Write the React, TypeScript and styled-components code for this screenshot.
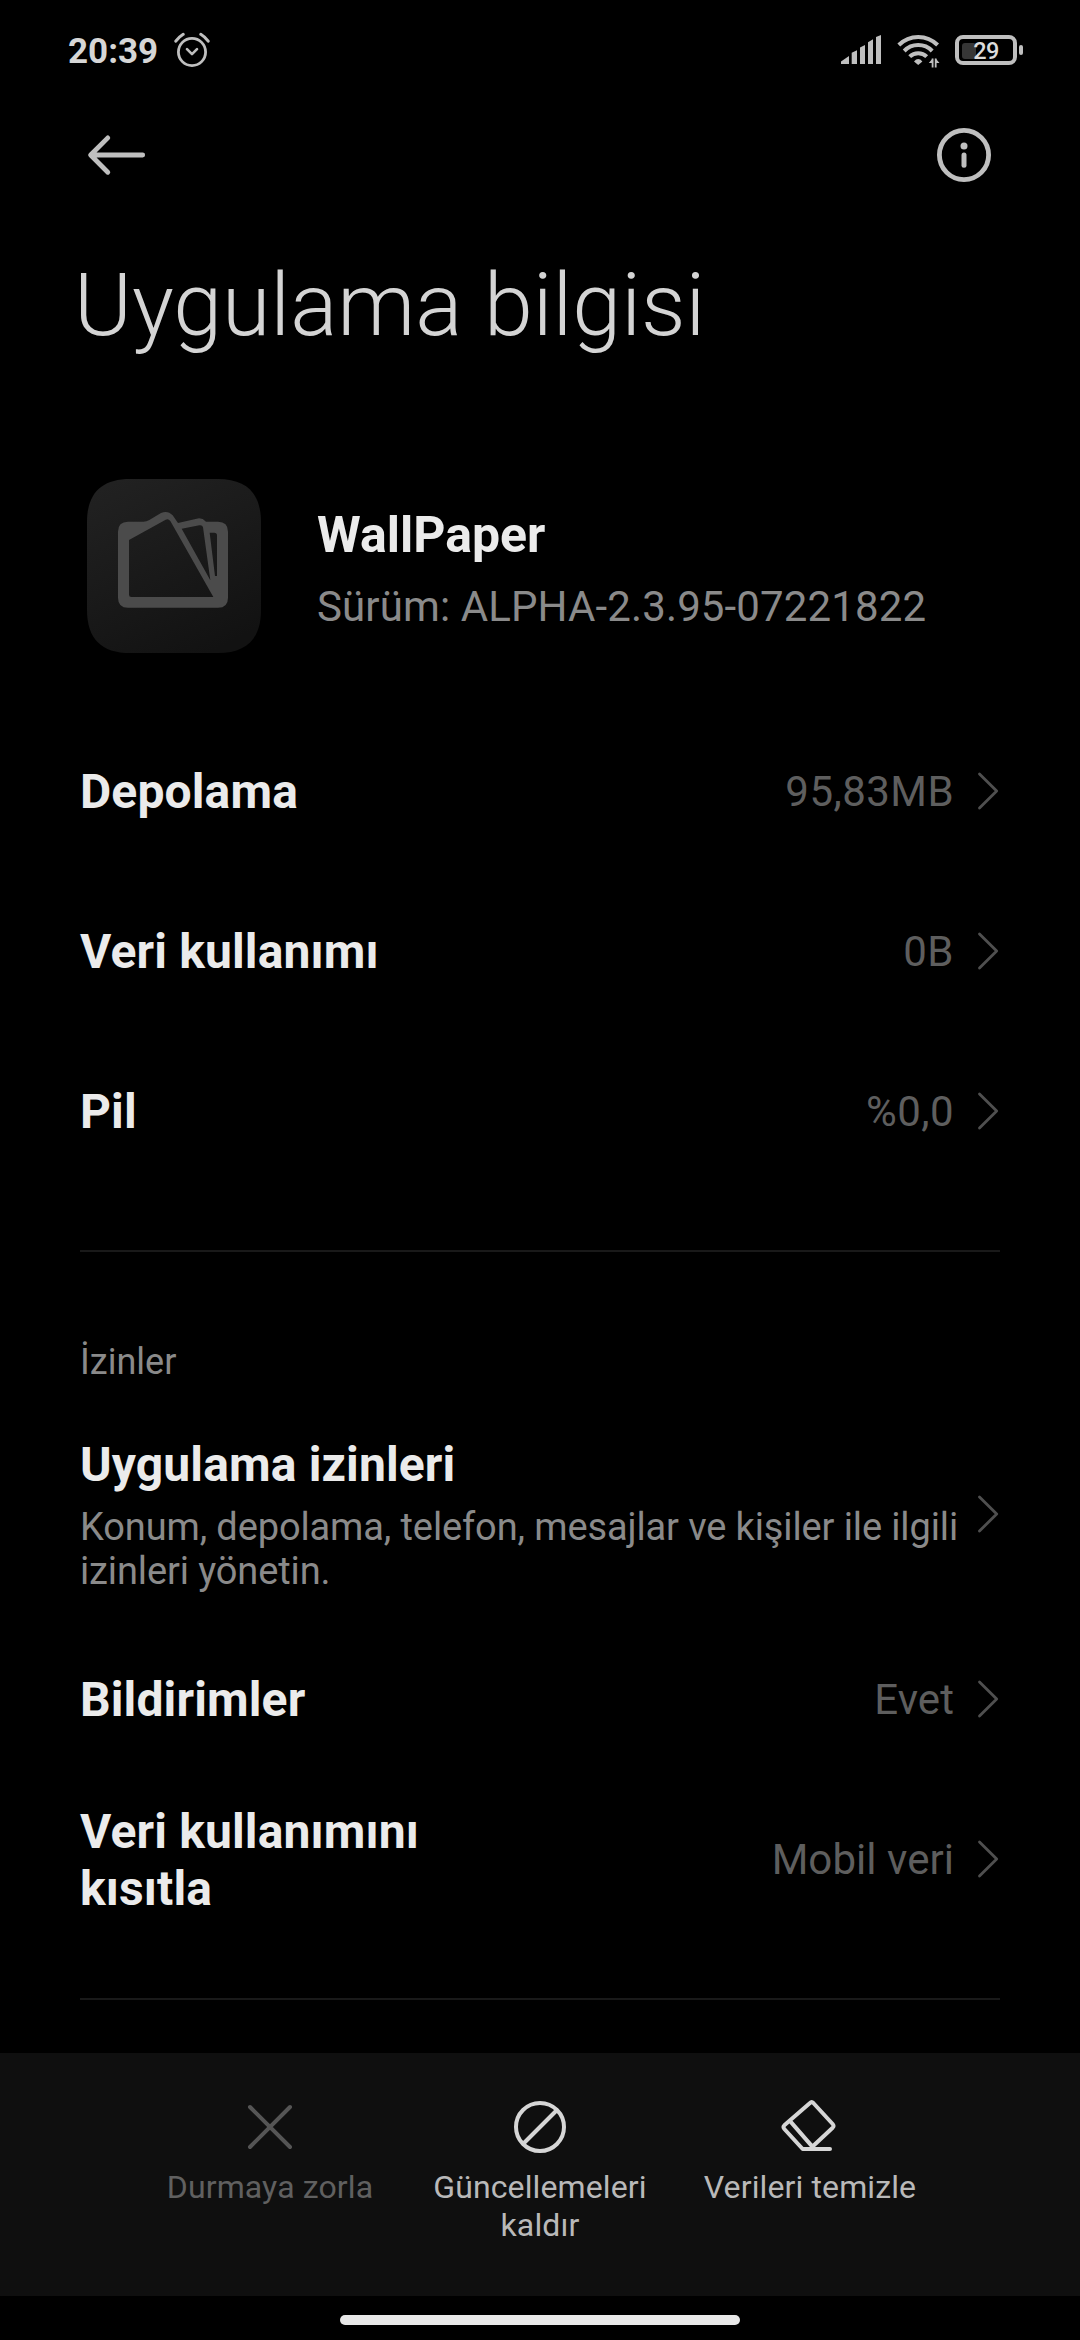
import React from "react";
import styled, { createGlobalStyle } from "styled-components";

const GlobalStyle = createGlobalStyle`
  * { box-sizing: border-box; }
  html, body { margin: 0; padding: 0; background: #000; }
  body { font-family: Roboto, "Noto Sans", sans-serif; color: #e8e8e8; }
  svg { display: block; flex: none; }
`;

const Screen = styled.div`
  width: 1080px;
  height: 2340px;
  display: flex;
  flex-direction: column;
  background: #000;
  overflow: hidden;
`;

const StatusBar = styled.header`
  height: 100px;
  flex: none;
  display: flex;
  align-items: center;
  justify-content: space-between;
  padding: 0 57px 0 68px;
`;

const StatusGroup = styled.div<{ $gap: number }>`
  display: flex;
  align-items: center;
  gap: ${(p) => p.$gap}px;
`;

const Clock = styled.span`
  font-size: 35px;
  line-height: 42px;
  font-weight: 700;
  color: #d6d6d6;
  padding-top: 3px;
`;

const Battery = styled.div`
  display: flex;
  align-items: center;
  gap: 2px;
`;

const BatteryBody = styled.div`
  width: 62px;
  height: 30px;
  border: 4px solid #bfbfbf;
  border-radius: 8px;
  padding: 3px;
  display: grid;
  align-items: center;
`;

const BatteryFill = styled.div`
  grid-area: 1 / 1;
  width: 14px;
  height: 16px;
  border-radius: 3px;
  background: #363636;
`;

const BatteryText = styled.span`
  grid-area: 1 / 1;
  justify-self: center;
  font-size: 23.5px;
  line-height: 16px;
  letter-spacing: -0.6px;
  font-weight: 500;
  color: #dcdcdc;
  padding-top: 1px;
`;

const BatteryTip = styled.div`
  width: 4px;
  height: 10px;
  border-radius: 2px;
  background: #bfbfbf;
`;

const Toolbar = styled.nav`
  height: 110px;
  flex: none;
  display: flex;
  align-items: center;
  justify-content: space-between;
  padding: 0 86px;
`;

const IconButton = styled.button`
  border: 0;
  padding: 0;
  background: none;
`;

const Title = styled.h1`
  margin: 43px 0 0 74px;
  height: 104px;
  font-size: 88px;
  line-height: 104px;
  font-weight: 300;
  color: #d4d4d4;
  white-space: nowrap;
`;

const AppHeader = styled.section`
  margin-top: 122px;
  height: 174px;
  padding: 0 87px;
  display: flex;
  align-items: center;
  gap: 56px;
`;

const AppText = styled.div`
  display: flex;
  flex-direction: column;
  gap: 17px;
  padding-top: 5px;
`;

const AppName = styled.h2`
  margin: 0;
  font-size: 50px;
  line-height: 60px;
  font-weight: 700;
  color: #ebebeb;
`;

const AppVersion = styled.span`
  font-size: 42px;
  line-height: 50px;
  letter-spacing: 0.12px;
  color: #8a8a8a;
  white-space: nowrap;
`;

const List = styled.section<{ $top: number }>`
  margin-top: ${(p) => p.$top}px;
  padding: 0 80px;
  display: flex;
  flex-direction: column;
`;

const Row = styled.div<{ $height: number }>`
  height: ${(p) => p.$height}px;
  display: flex;
  align-items: center;
`;

const RowText = styled.div<{ $width?: number }>`
  flex: ${(p) => (p.$width ? "none" : "1")};
  width: ${(p) => (p.$width ? p.$width + "px" : "auto")};
  padding-bottom: ${(p) => (p.$width ? "0" : "1px")};
`;

const RowTitle = styled.div`
  font-size: 48px;
  line-height: 57px;
  letter-spacing: 0.14px;
  font-weight: 700;
  color: #ebebeb;
`;

const RowNote = styled.div`
  font-size: 38px;
  line-height: 44px;
  letter-spacing: -0.12px;
  color: #8a8a8a;
  padding-top: 12px;
  white-space: pre;
`;

const RowValue = styled.span<{ $numeric: boolean }>`
  margin-left: auto;
  padding-bottom: 1px;
  font-size: 42px;
  line-height: 50px;
  letter-spacing: ${(p) => (p.$numeric ? "0.45px" : "0.05px")};
  color: #5e5e5e;
  white-space: nowrap;
`;

const ChevronBox = styled.div<{ $gap: number }>`
  margin: 0 0 3px ${(p) => p.$gap}px;
`;

const Divider = styled.hr<{ $top: number }>`
  width: 920px;
  height: 2px;
  flex: none;
  border: 0;
  margin: ${(p) => p.$top}px 80px 0;
  background: #191919;
`;

const SectionLabel = styled.h3`
  margin: 88px 80px 0;
  height: 44px;
  font-size: 36px;
  line-height: 44px;
  font-weight: 400;
  color: #8a8a8a;
`;

const ActionBar = styled.footer`
  margin-top: auto;
  height: 243px;
  flex: none;
  display: flex;
  justify-content: center;
  background: #0f0f0f;
`;

const Action = styled.button<{ $disabled?: boolean }>`
  width: 270px;
  border: 0;
  padding: 44px 10px 0;
  background: none;
  display: flex;
  flex-direction: column;
  align-items: center;
  gap: 11px;
  font-family: inherit;
  font-size: 32px;
  line-height: 38px;
  letter-spacing: 0.12px;
  color: ${(p) => (p.$disabled ? "#606060" : "#b9b9b9")};
  white-space: pre-line;
`;

const HomeArea = styled.div`
  height: 44px;
  flex: none;
  display: flex;
  justify-content: center;
  padding-top: 19px;
`;

const HomePill = styled.div`
  width: 400px;
  height: 10px;
  border-radius: 5px;
  background: #e8e8e8;
`;

const AlarmIcon = () => (
  <svg width="36" height="36" viewBox="174 32 36 36" fill="none" stroke="#bfbfbf" strokeLinecap="round">
    <circle cx="192" cy="52" r="13.6" strokeWidth="2.8" />
    <path d="M187 49.2l5 5 5-5" strokeWidth="2.6" strokeLinejoin="round" />
    <path d="M175.8 41.2q3-4.200 7.400-6.900M208.200 41.200q-3-4.200-7.400-6.900" strokeWidth="3" />
  </svg>
);

const SignalIcon = () => (
  <svg width="40" height="30" viewBox="841 35 40 30" fill="#bfbfbf">
    <path d="M841 61.500l8-5.500v8h-8zM851.700 52.700l5.300-2.500v13.800h-5.300zM860 47.500l5-2.500v19h-5zM868 42.300l5-3v24.700h-5zM876 37l5-2v29h-5z" />
  </svg>
);

const WifiIcon = () => (
  <svg width="44" height="36" viewBox="896 32 44 36" fill="none" stroke="#bfbfbf" strokeWidth="4">
    <path d="M898.800 45a27.300 27.300 0 0 1 38.800 0M904.200 51a19.600 19.600 0 0 1 28 0M909.700 56.700a12 12 0 0 1 17 0" />
    <path d="M914 61.500q4.200-4.800 8.400 0L918.200 65z" fill="#bfbfbf" stroke="none" />
    <path d="M932.600 58.500v9M935.700 58.500v9" strokeWidth="1.800" />
    <path d="M932.600 58.500v4.500h-3.800zM935.700 58.500v4.500h3.800z" fill="#bfbfbf" stroke="none" />
  </svg>
);

const BackIcon = () => (
  <svg width="60" height="44" viewBox="86 133.300 60 44" fill="none" stroke="#bfbfbf" strokeWidth="4.800" strokeLinecap="round" strokeLinejoin="round">
    <path d="M107.800 138.200L90.600 155.300l17.200 17.200M91 155.300h51.700" />
  </svg>
);

const InfoIcon = () => (
  <svg width="60" height="60" viewBox="-30 -30 60 60">
    <circle r="24.600" fill="none" stroke="#bfbfbf" strokeWidth="4.800" />
    <circle cy="-9" r="3.500" fill="#bfbfbf" />
    <path d="M0 0v10.200" stroke="#bfbfbf" strokeWidth="5" strokeLinecap="round" />
  </svg>
);

const WallpaperIcon = () => (
  <svg width="174" height="174" viewBox="21 27 522 522">
    <defs>
      <linearGradient id="tile" x1="0.200" y1="0" x2="0.700" y2="1">
        <stop offset="0" stopColor="#212121" />
        <stop offset="1" stopColor="#121212" />
      </linearGradient>
    </defs>
    <path
      d="M151 27H413C500 27 543 70 543 157V419C543 506 500 549 413 549H151C64 549 21 506 21 419V157C21 70 64 27 151 27Z"
      fill="url(#tile)"
    />
    <path
      fill="#4b4b4b"
      fillRule="evenodd"
      d="M144 155H190Q200 155 208 150L243 129Q263 120 278 136L294 159L350 146Q366 142 378 155H414Q444 155 444 185V383Q444 413 414 413H144Q114 413 114 383V185Q114 155 144 155Z
         M147 210V374Q147 381 154 381H400L271 153Q265 145 257 149Z
         M305 176L391 331L369 172Q367 164 358 166Z
         M389 188L405 318H411V196Q411 188 403 188Z"
    />
  </svg>
);

const Chevron = ({ gap = 0 }: { gap?: number }) => (
  <ChevronBox $gap={gap}>
    <svg width="25" height="42" viewBox="0 0 25 42" fill="none" stroke="#4f4f4f" strokeWidth="2.800" strokeLinecap="round" strokeLinejoin="round">
      <path d="M4.500 4L21.700 21 4.500 38" />
    </svg>
  </ChevronBox>
);

const StopIcon = () => (
  <svg width="60" height="60" viewBox="-30 -30 60 60" stroke="#555" strokeWidth="4" strokeLinecap="round">
    <path d="M-20 -20L20 20M20 -20L-20 20" />
  </svg>
);

const BlockIcon = () => (
  <svg width="60" height="60" viewBox="-30 -30 60 60" stroke="#d6d6d6" strokeWidth="4" fill="none">
    <circle r="24" />
    <path d="M-17 17L17 -17" />
  </svg>
);

const EraserIcon = () => (
  <svg width="60" height="60" viewBox="840 51 180 180" stroke="#d6d6d6" strokeWidth="12" fill="none" strokeLinecap="round" strokeLinejoin="round">
    <path d="M990 207H908L853 147Q848 141 853 136L930 69Q935 64 940 69L998 132Q1003 138 998 143L937 200L871 124" />
  </svg>
);

type RowData = { title: string; value: string };

const usage: RowData[] = [
  { title: "Depolama", value: "95,83MB" },
  { title: "Veri kullanımı", value: "0B" },
  { title: "Pil", value: "%0,0" },
];

const ValueRow = ({ title, value, width }: RowData & { width?: number }) => (
  <Row $height={160}>
    <RowText $width={width}>
      <RowTitle>{title}</RowTitle>
    </RowText>
    <RowValue $numeric={/\d/.test(value)}>{value}</RowValue>
    <Chevron gap={21} />
  </Row>
);

export default function App() {
  return (
    <Screen>
      <GlobalStyle />
      <StatusBar>
        <StatusGroup $gap={16}>
          <Clock>20:39</Clock>
          <AlarmIcon />
        </StatusGroup>
        <StatusGroup $gap={15}>
          <SignalIcon />
          <WifiIcon />
          <Battery>
            <BatteryBody>
              <BatteryFill />
              <BatteryText>29</BatteryText>
            </BatteryBody>
            <BatteryTip />
          </Battery>
        </StatusGroup>
      </StatusBar>
      <Toolbar>
        <IconButton aria-label="Geri">
          <BackIcon />
        </IconButton>
        <IconButton aria-label="Bilgi">
          <InfoIcon />
        </IconButton>
      </Toolbar>
      <Title>Uygulama bilgisi</Title>
      <AppHeader>
        <WallpaperIcon />
        <AppText>
          <AppName>WallPaper</AppName>
          <AppVersion>Sürüm: ALPHA-2.3.95-07221822</AppVersion>
        </AppText>
      </AppHeader>
      <List $top={59}>
        {usage.map((r) => (
          <ValueRow key={r.title} {...r} />
        ))}
      </List>
      <Divider $top={58} />
      <SectionLabel>İzinler</SectionLabel>
      <List $top={26}>
        <Row $height={210}>
          <RowText>
            <RowTitle>Uygulama izinleri</RowTitle>
            <RowNote>{"Konum, depolama, telefon, mesajlar ve kişiler ile ilgili\nizinleri yönetin."}</RowNote>
          </RowText>
          <Chevron />
        </Row>
        <ValueRow title="Bildirimler" value="Evet" />
        <ValueRow title="Veri kullanımını kısıtla" value="Mobil veri" width={400} />
      </List>
      <Divider $top={58} />
      <ActionBar>
        <Action $disabled>
          <StopIcon />
          Durmaya zorla
        </Action>
        <Action>
          <BlockIcon />
          {"Güncellemeleri\nkaldır"}
        </Action>
        <Action>
          <EraserIcon />
          Verileri temizle
        </Action>
      </ActionBar>
      <HomeArea>
        <HomePill />
      </HomeArea>
    </Screen>
  );
}
